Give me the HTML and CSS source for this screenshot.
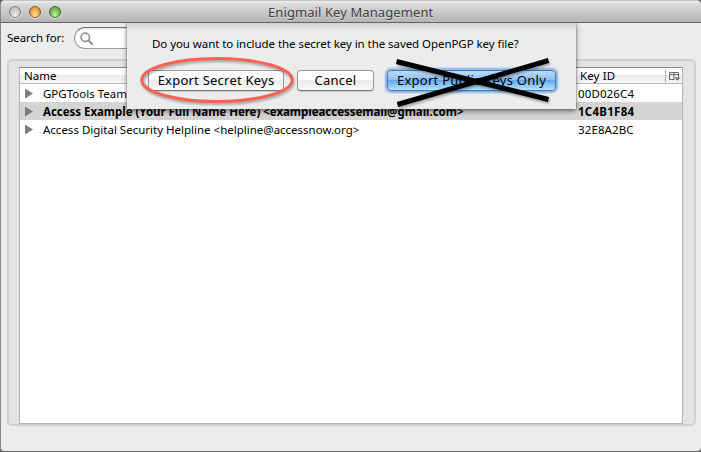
FILE: index.html
```html
<!DOCTYPE html>
<html lang="en">
<head>
<meta charset="utf-8">
<title>Enigmail Key Management</title>
<link rel="stylesheet" href="styles.css">
</head>
<body>
<main class="window">
  <header class="titlebar">
    <div class="lights"><i class="light"></i><i class="light amber"></i><i class="light green"></i></div>
    <h1>Enigmail Key Management</h1>
  </header>
  <div class="search-row">
    <label>Search for:</label>
    <div class="search">
      <svg width="14" height="14" viewBox="0 0 14 14" fill="none" stroke="#999"><circle cx="5.3" cy="5.3" r="4.2" stroke-width="1.8"/><path d="M8.3 8.3 12.6 12.6" stroke-width="2.2"/></svg>
    </div>
  </div>
  <section class="panel">
    <div class="tree">
      <div class="row head"><div class="name">Name</div><div class="key">Key ID</div>
        <div class="picker"><svg width="13" height="12" viewBox="0 0 13 12" fill="none" stroke="#666"><path d="M5.5 9.5H.5V2.5H9.5V7M.5 4.5H9.5M5 2.5V9"/><path d="M5.5 7.5H11.5L8.5 10.8Z" fill="#666" stroke="none"/></svg></div>
      </div>
      <div class="row"><div class="name"><i class="twisty"></i><span>GPGTools Team</span></div><div class="key">00D026C4</div></div>
      <div class="row selected"><div class="name"><i class="twisty"></i><span>Access Example (Your Full Name Here) &lt;exampleaccessemail@gmail.com&gt;</span></div><div class="key">1C4B1F84</div></div>
      <div class="row"><div class="name"><i class="twisty"></i><span>Access Digital Security Helpline &lt;helpline@accessnow.org&gt;</span></div><div class="key">32E8A2BC</div></div>
    </div>
  </section>
  <div class="sheet">
    <p>Do you want to include the secret key in the saved OpenPGP key file?</p>
    <div class="buttons">
      <button class="secret">Export Secret Keys</button>
      <button class="cancel">Cancel</button>
      <button class="public">Export Public Keys Only</button>
    </div>
  </div>
  <svg class="marks" width="701" height="130" viewBox="0 0 701 130" fill="none">
    <ellipse cx="217" cy="80" rx="75.2" ry="21.5" stroke="#fc6254" stroke-width="3"/>
    <path d="M396.5 61.5 548.5 99.5M397.5 104.5 548.5 60.5" stroke="#000" stroke-width="5"/>
  </svg>
</main>
</body>
</html>
```
FILE: styles.css
```css
* { box-sizing: border-box; }
body { margin: 0; background: #666; font: 11.5px/18px "Noto Sans", "Open Sans", sans-serif; color: #000; }
.window { position: relative; width: 701px; height: 451px; overflow: hidden; background: #ececec; border-left: 1px solid #888; border-radius: 5px 5px 4px 4px; }
.titlebar { position: relative; z-index: 3; height: 23px; border-top: 1px solid #c4c4c4; border-bottom: 1px solid #656565; background: linear-gradient(#eee, #dadada 15%, #b4b4b4); display: flex; align-items: center; }
.lights { display: flex; gap: 8px; padding-left: 8px; }
.light { width: 12px; height: 12px; border-radius: 50%; border: 1px solid #858585; background: radial-gradient(ellipse at 50% 95%, #f6f6f6, #c8c8c8 60%, #aaa); box-shadow: 0 1px #e8e8e8; }
.amber { border-color: #925b29; background: radial-gradient(ellipse at 50% 90%, #ffe890, #eea44c 60%, #bd7029); }
.green { border-color: #3d7136; background: radial-gradient(ellipse at 50% 90%, #d2f7a9, #74b957 60%, #40843b); }
h1 { margin: 0 0 0 207px; font-size: 13px; font-weight: 400; line-height: 20px; letter-spacing: .09px; color: #404040; text-shadow: 0 1px rgba(255,255,255,.45); }
.search-row { display: flex; height: 36px; padding: 4px 0 0 6px; }
label { width: 67px; padding-top: 2px; letter-spacing: -.08px; }
.search { width: 180px; height: 22px; padding: 4px 5px; border: 1px solid #9d9d9d; border-top-color: #777; border-radius: 11px; background: #fff; box-shadow: inset 0 1px 1px #ddd; line-height: 0; }
.panel { width: 689px; height: 367px; margin-left: 6px; padding: 6px 10px; border: 2px solid #cfcfcf; border-radius: 5px; background: #e3e3e3; }
.tree { width: 664px; height: 357px; border: 1px solid #b4b4b4; border-top-color: #888; background: #fff; }
.row { display: flex; height: 18px; line-height: 20px; white-space: nowrap; }
.row span { padding-top: 2px; }
.head { height: 16px; line-height: 15px; border-bottom: 1px solid #b8b8b8; background: linear-gradient(#fff, #fff 45%, #ededed 50%, #f5f5f5); }
.selected { background: #d4d4d4; font-weight: 700; }
.selected span { letter-spacing: -.035px; }
.selected .key { letter-spacing: .26px; }
.name { display: flex; align-items: center; width: 558px; padding-left: 4px; }
.head .name { display: block; }
.key { width: 90px; letter-spacing: .12px; }
.head .key { padding-left: 2px; }
.picker { height: 12px; margin: 2px 0 0 -3px; padding-left: 3px; border-left: 1px solid #aaa; line-height: 0; }
.twisty { width: 8px; height: 10px; margin: 1px 10px 0 1px; background: #7d7d7d; clip-path: polygon(0 0, 100% 50%, 0 100%); flex: none; }
.sheet { position: absolute; z-index: 2; left: 126px; top: 23px; width: 449px; height: 86px; padding-top: 12px; background: linear-gradient(#d2d2d2, #ececec 8px); box-shadow: 0 2px 5px rgba(0,0,0,.5), 0 0 1px #555; }
p { margin: 0 0 0 25px; height: 35px; letter-spacing: -.06px; white-space: nowrap; }
.buttons { display: flex; padding-left: 21px; }
button { height: 21px; padding: 0 0 1px; border: 1px solid #999; border-bottom-color: #777; border-radius: 4px; font: 13px/18px "Noto Sans", "Open Sans", sans-serif; letter-spacing: .23px; white-space: nowrap; background: linear-gradient(#fff, #fff 45%, #ececec 50%, #fafafa); color: #000; box-shadow: 0 1px 1px #ccc; }
.secret { width: 136px; }
.cancel { width: 77px; margin-left: 13px; }
.public { width: 169px; margin-left: 13px; letter-spacing: .26px; border-color: #4478ba; background: linear-gradient(#bddcf8, #8fc0f0 45%, #65a9ed 50%, #b5e5ff); box-shadow: 0 0 2px 2px #88b5df; }
.marks { position: absolute; z-index: 4; left: -1px; top: 0; filter: drop-shadow(1px 2px 1px rgba(0,0,0,.3)); }
```
